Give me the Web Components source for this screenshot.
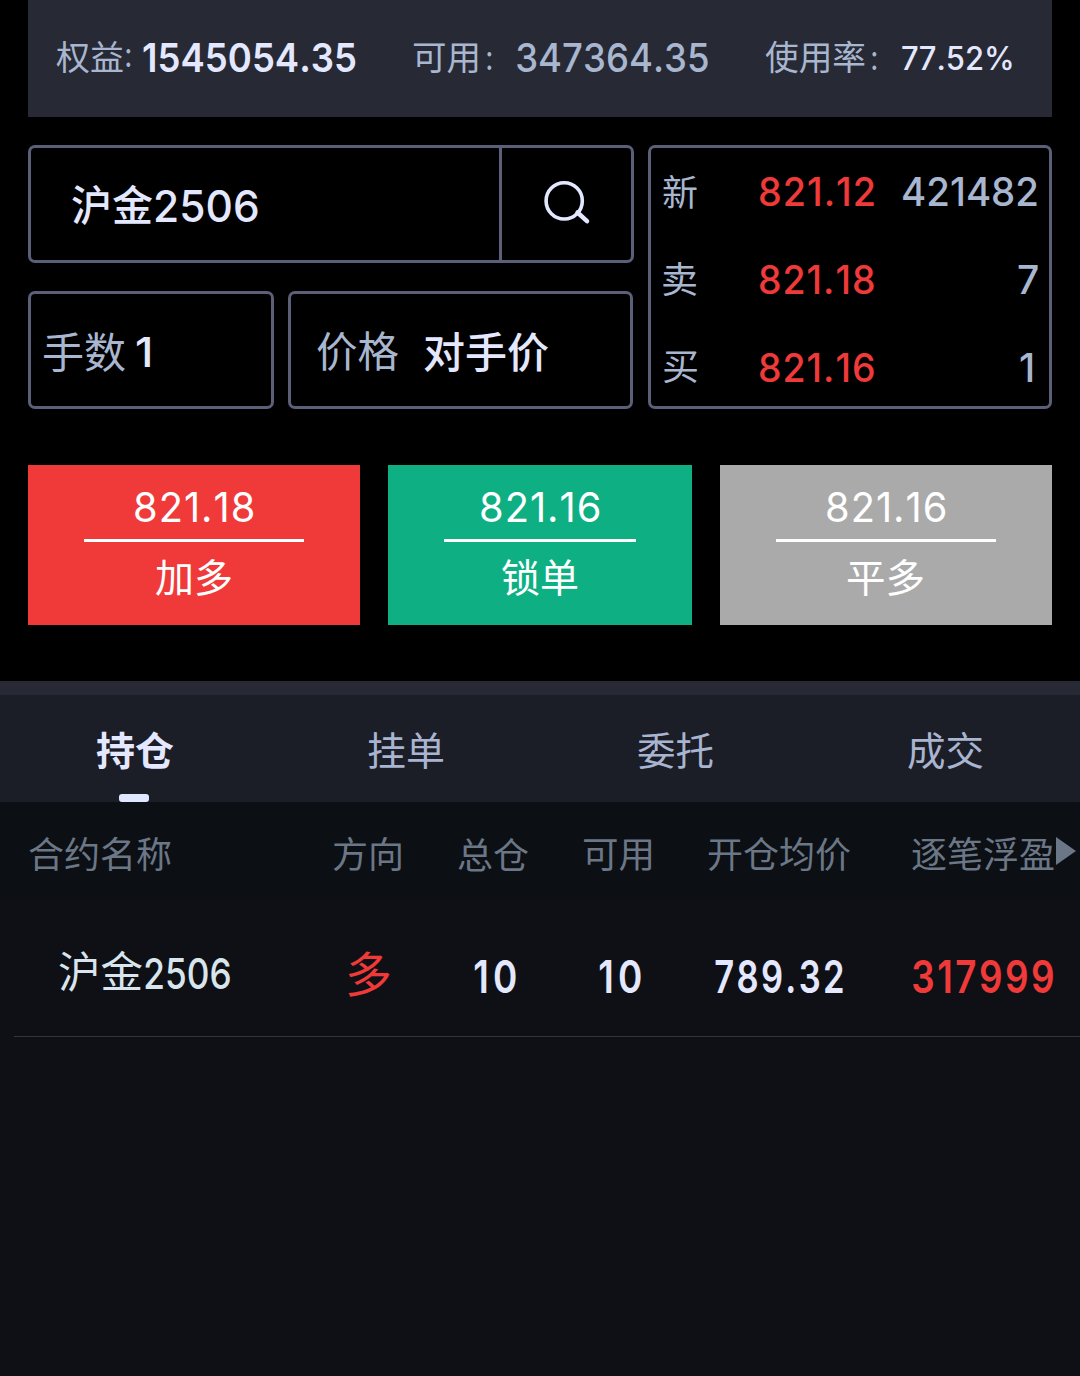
<!DOCTYPE html>
<html lang="zh-CN">
<head>
<meta charset="UTF-8">
<title>交易</title>
<style>
  body {
    margin: 0;
    background: #000;
    font-family: 'Noto Sans CJK SC', sans-serif;
    --line: #5b6078;
    --text: #e4e8ff;
    --label: #a8b7cf;
    --muted: #6b7787;
    --up: #f03a3a;
    --panel: #272935;
  }
</style>
</head>
<body>
<trade-page></trade-page>

<script>
// Text cut to its ink box: "w" is the drawn width, "size" the font size.
class InkText extends HTMLElement {
  constructor() {
    super();
    this.attachShadow({ mode: 'open' });
  }

  connectedCallback() {
    const size = Number(this.getAttribute('size'));
    const weight = this.getAttribute('weight') || 400;
    const space = Number(this.getAttribute('space') || 0);
    const dy = Number(this.getAttribute('dy') || 0);
    const text = this.textContent;
    const latin = /^[\x20-\x7f]+$/.test(text);
    const family = latin ? "Inter, sans-serif" : "'Noto Sans CJK SC', sans-serif";

    const ctx = document.createElement('canvas').getContext('2d');
    ctx.font = `${weight} ${size}px ${family}`;
    ctx.fontKerning = 'none';
    const m = ctx.measureText(text);
    const ink = m.actualBoundingBoxLeft + m.actualBoundingBoxRight + space * (text.length - 1);
    const w = Number(this.getAttribute('w')) || ink;
    const k = w / ink;
    const base = (size + m.fontBoundingBoxAscent - m.fontBoundingBoxDescent) / 2;
    const h = m.actualBoundingBoxAscent + m.actualBoundingBoxDescent;
    const top = m.actualBoundingBoxAscent - base + dy;

    this.shadowRoot.innerHTML = `
      <style>
        :host {
          display: block;
          flex: none;
          width: ${w}px;
          height: ${h}px;
        }
        span {
          display: block;
          width: max-content;
          white-space: nowrap;
          font: ${weight} ${size}px/${size}px ${family};
          font-kerning: none;
          font-variant-ligatures: none;
          letter-spacing: ${space}px;
          transform-origin: 0 0;
          transform: translate(${m.actualBoundingBoxLeft * k}px, ${top}px) scaleX(${k});
        }
      </style>
      <span><slot></slot></span>
    `;
  }
}
customElements.define('ink-text', InkText);

class AccountBar extends HTMLElement {
  constructor() {
    super();
    this.attachShadow({ mode: 'open' }).innerHTML = `
      <style>
        :host {
          display: flex;
          align-items: center;
          box-sizing: border-box;
          height: 117px;
          margin: 0 28px;
          padding: 0 40px 1px 28px;
          justify-content: space-between;
          background: var(--panel);
          color: var(--label);
        }
        div { display: flex; align-items: center; }
        .light { color: var(--text); }
      </style>
      <div>
        <ink-text size="34" w="67" dy="-1">权益</ink-text>
        <ink-text size="34" w="5" style="margin-left:3px">:</ink-text>
        <ink-text class="light" size="40" w="213" weight="560" dy="-1" style="margin-left:12px">1545054.35</ink-text>
      </div>
      <div>
        <ink-text size="34" w="65">可用</ink-text>
        <ink-text size="34" w="5" dy="3" style="margin-left:9px">:</ink-text>
        <ink-text size="40" w="191" weight="520" dy="-1" style="margin-left:25px">347364.35</ink-text>
      </div>
      <div>
        <ink-text size="34" w="100" dy="-1">使用率</ink-text>
        <ink-text size="34" w="5" dy="3" style="margin-left:7px">:</ink-text>
        <ink-text class="light" size="32" w="110" weight="540" style="margin-left:25px">77.52%</ink-text>
      </div>
    `;
  }
}
customElements.define('account-bar', AccountBar);

class OrderForm extends HTMLElement {
  constructor() {
    super();
    this.attachShadow({ mode: 'open' }).innerHTML = `
      <style>
        :host {
          display: grid;
          grid-template-columns: 246px 345px 404px;
          grid-template-rows: 118px 118px;
          column-gap: 14px;
          row-gap: 28px;
          padding: 28px 28px 0;
          color: var(--label);
        }
        .box {
          display: flex;
          align-items: center;
          box-sizing: border-box;
          border: 3px solid var(--line);
          border-radius: 7px;
        }
        .light { color: var(--text); }
        .contract { grid-column: 1 / 3; margin-right: -1px; padding-left: 41px; gap: 3px; }
        .search {
          display: flex;
          align-items: center;
          justify-content: center;
          align-self: stretch;
          box-sizing: border-box;
          width: 132px;
          margin-left: auto;
          border-left: 3px solid var(--line);
        }
        .lots { padding-left: 13px; gap: 11px; }
        .price { padding-left: 26px; gap: 25px; }
        .quote { grid-column: 3; grid-row: 1 / 3; margin-left: 1px; margin-right: -1px; display: grid; }
        slot { display: contents; }
      </style>
      <div class="box contract light">
        <ink-text size="42" w="81" weight="500" dy="1">沪金</ink-text>
        <ink-text size="44" w="102" weight="520" dy="2">2506</ink-text>
        <div class="search">
          <svg width="48" height="46" viewBox="0 0 48 46" fill="none" stroke="#e4e8ff">
            <circle cx="21.200" cy="19.900" r="18.100" stroke-width="3.600"/>
            <path d="M34.500 31.500L44 40.200" stroke-width="4.500" stroke-linecap="round"/>
          </svg>
        </div>
      </div>
      <div class="box lots">
        <ink-text size="42" w="81" dy="2">手数</ink-text>
        <ink-text class="light" size="41" w="14" weight="540" dy="2">1</ink-text>
      </div>
      <div class="box price">
        <ink-text size="42" w="82" dy="1">价格</ink-text>
        <ink-text class="light" size="42" w="124" weight="500" dy="1">对手价</ink-text>
      </div>
      <div class="box quote"><slot></slot></div>
    `;
  }
}
customElements.define('order-form', OrderForm);

class QuoteRow extends HTMLElement {
  connectedCallback() {
    const volW = this.getAttribute('vol-width');
    this.attachShadow({ mode: 'open' }).innerHTML = `
      <style>
        :host {
          display: grid;
          grid-template-columns: 97px 1fr auto;
          align-items: center;
          height: 88px;
          padding: 0 ${this.getAttribute('end')}px 0 12px;
        }
        .price { color: var(--up); }
      </style>
      <ink-text size="36" w="34" dy="-1">${this.getAttribute('label')}</ink-text>
      <ink-text class="price" size="39" w="114" weight="500" space="1" dy="-1">${this.getAttribute('price')}</ink-text>
      <ink-text size="39" w="${volW}" weight="500" dy="-1">${this.getAttribute('vol')}</ink-text>
    `;
  }
}
customElements.define('quote-row', QuoteRow);

class OrderButton extends HTMLElement {
  connectedCallback() {
    this.attachShadow({ mode: 'open' }).innerHTML = `
      <style>
        :host {
          display: flex;
          flex-direction: column;
          box-sizing: border-box;
          height: 160px;
          padding: 0 56px;
          color: #fff;
        }
        div { display: flex; align-items: center; justify-content: center; }
        .price { height: 77px; padding: 10px 1px 0 0; box-sizing: border-box; border-bottom: 3px solid #fff; }
        .name { height: 71px; padding-right: 2px; }
      </style>
      <div class="price"><ink-text size="41" w="118" weight="420" space="1">${this.getAttribute('price')}</ink-text></div>
      <div class="name"><ink-text size="39" w="75" dy="-1">${this.textContent}</ink-text></div>
    `;
  }
}
customElements.define('order-button', OrderButton);

class TabBar extends HTMLElement {
  constructor() {
    super();
    this.attachShadow({ mode: 'open' });
  }

  connectedCallback() {
    const tabs = this.getAttribute('tabs').split(',');
    this.shadowRoot.innerHTML = `
      <style>
        :host {
          display: grid;
          grid-template-columns: repeat(4, 1fr);
          height: 107px;
          border-top: 14px solid var(--panel);
          background: #1b1d27;
          color: #a8b4d0;
        }
        div {
          display: flex;
          flex-direction: column;
          align-items: center;
          justify-content: center;
          padding-top: 3px;
          position: relative;
        }
        .on { color: var(--text); }
        .on::after {
          content: '';
          position: absolute;
          left: 119px;
          bottom: 0;
          width: 30px;
          height: 8px;
          border-radius: 3px;
          background: #e0e8ff;
        }
      </style>
      ${tabs.map((t, i) => `<div class="${i ? '' : 'on'}"><ink-text size="39" w="${i ? 75 : 78}" weight="${i ? 400 : 700}">${t}</ink-text></div>`).join('')}
    `;
  }
}
customElements.define('tab-bar', TabBar);

class PositionTable extends HTMLElement {
  constructor() {
    super();
    this.attachShadow({ mode: 'open' }).innerHTML = `
      <style>
        :host {
          display: block;
          height: 574px;
          background: #0f1015;
        }
        .row {
          display: grid;
          grid-template-columns: 304px 125px 126px 124px 204px 1fr;
          align-items: center;
          padding-left: 29px;
        }
        .head { height: 97px; background: #0c0f13; color: var(--muted); }
        .head > * { margin-top: 7px; }
        .last { display: flex; align-items: center; gap: 2px; }
        .body {
          height: 138px;
          margin-left: 14px;
          padding-left: 15px;
          box-sizing: border-box;
          border-bottom: 1px solid #33363d;
          color: var(--text);
        }
        .body > * { margin-top: 17px; }
        .name { display: flex; align-items: center; gap: 3px; margin-left: 30px; color: #d9e5ec; }
        .up { color: var(--up); }
      </style>
      <div class="row head">
        <ink-text size="36" w="142">合约名称</ink-text>
        <ink-text size="36" w="68">方向</ink-text>
        <ink-text size="36" w="70">总仓</ink-text>
        <ink-text size="36" w="67" dy="1">可用</ink-text>
        <ink-text size="36" w="142">开仓均价</ink-text>
        <div class="last">
          <ink-text size="36" w="142" dy="-1">逐笔浮盈</ink-text>
          <svg width="20" height="28" viewBox="0 0 20 28" style="margin-top:-6px"><path d="M0 0L20 14L0 28Z" fill="#6b7787"/></svg>
        </div>
      </div>
      <div class="row body">
        <div class="name">
          <ink-text size="43" w="83" dy="-5">沪金</ink-text>
          <ink-text size="43" w="85" weight="500" dy="-3">2506</ink-text>
        </div>
        <ink-text class="up" size="48" w="42" dy="-2" style="margin-left:15px">多</ink-text>
        <ink-text size="45" w="41" weight="560" space="5" style="margin-left:17px">10</ink-text>
        <ink-text size="45" w="41" weight="560" space="5" style="margin-left:16px">10</ink-text>
        <ink-text size="45" w="128" weight="560" space="3" style="margin-left:7px">789.32</ink-text>
        <ink-text class="up" size="45" w="140" weight="560" space="3" style="margin-left:1px">317999</ink-text>
      </div>
    `;
  }
}
customElements.define('position-table', PositionTable);

class TradePage extends HTMLElement {
  constructor() {
    super();
    this.attachShadow({ mode: 'open' }).innerHTML = `
      <style>
        :host {
          display: block;
          width: 1080px;
          height: 1376px;
          overflow: hidden;
        }
        .actions {
          display: grid;
          grid-template-columns: 332px 304px 332px;
          gap: 28px;
          padding: 56px 28px;
        }
        .buy { background: #f03a3a; }
        .lock { background: #0eb083; }
        .close { background: #aaa; }
      </style>
      <account-bar></account-bar>
      <order-form>
        <quote-row label="新" price="821.12" vol="421482" vol-width="134" end="12"></quote-row>
        <quote-row label="卖" price="821.18" vol="7" vol-width="20" end="11"></quote-row>
        <quote-row label="买" price="821.16" vol="1" vol-width="13" end="16"></quote-row>
      </order-form>
      <div class="actions">
        <order-button class="buy" price="821.18">加多</order-button>
        <order-button class="lock" price="821.16">锁单</order-button>
        <order-button class="close" price="821.16">平多</order-button>
      </div>
      <tab-bar tabs="持仓,挂单,委托,成交"></tab-bar>
      <position-table></position-table>
    `;
  }
}
customElements.define('trade-page', TradePage);
</script>
</body>
</html>
